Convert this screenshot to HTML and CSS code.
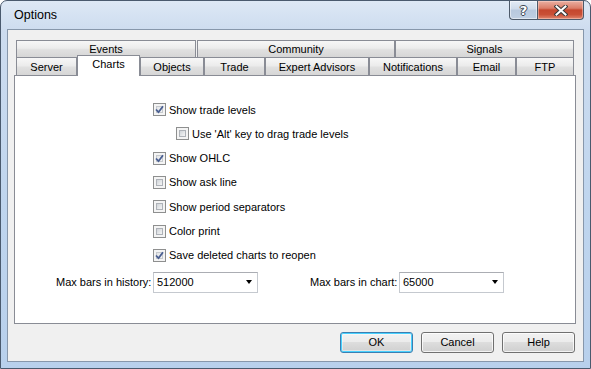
FILE: index.html
```html
<!DOCTYPE html>
<html>
<head>
<meta charset="utf-8">
<link rel="stylesheet" href="styles.css">
</head>
<body>
<div class="window">
  <div class="titlebar">
    <span class="title">Options</span>
    <div class="caption-btns">
      <div class="cbtn help"><span class="qmark">?</span></div>
      <div class="cbtn close">
        <svg width="14" height="11" viewBox="0 0 14 11">
          <path d="M2.5 1.5 L11.5 9.5 M11.5 1.5 L2.5 9.5" stroke="#3a3a3a" stroke-width="4" stroke-linecap="square"/>
          <path d="M2.5 1.5 L11.5 9.5 M11.5 1.5 L2.5 9.5" stroke="#ffffff" stroke-width="2" stroke-linecap="square"/>
        </svg>
      </div>
    </div>
  </div>
  <div class="client">
    <div class="tabctl">
      <div class="tabrow row1">
        <div class="tab t-events">Events</div>
        <div class="tab t-community">Community</div>
        <div class="tab t-signals">Signals</div>
      </div>
      <div class="tabrow row2">
        <div class="tab t-server">Server</div>
        <div class="tab selected t-charts">Charts</div>
        <div class="tab t-objects">Objects</div>
        <div class="tab t-trade">Trade</div>
        <div class="tab t-ea">Expert Advisors</div>
        <div class="tab t-notif">Notifications</div>
        <div class="tab t-email">Email</div>
        <div class="tab t-ftp">FTP</div>
      </div>
      <div class="panel">
        <div class="checks">
          <div class="check"><span class="cb checked"><svg width="9" height="9" viewBox="0 0 9 9"><path d="M1 4.5 L3.5 7.2 L8 1.2" fill="none" stroke="#4a5f92" stroke-width="1.8"/></svg></span><span>Show trade levels</span></div>
          <div class="check indent"><span class="cb"></span><span>Use 'Alt' key to drag trade levels</span></div>
          <div class="check"><span class="cb checked"><svg width="9" height="9" viewBox="0 0 9 9"><path d="M1 4.5 L3.5 7.2 L8 1.2" fill="none" stroke="#4a5f92" stroke-width="1.8"/></svg></span><span>Show OHLC</span></div>
          <div class="check"><span class="cb"></span><span>Show ask line</span></div>
          <div class="check"><span class="cb"></span><span>Show period separators</span></div>
          <div class="check"><span class="cb"></span><span>Color print</span></div>
          <div class="check"><span class="cb checked"><svg width="9" height="9" viewBox="0 0 9 9"><path d="M1 4.5 L3.5 7.2 L8 1.2" fill="none" stroke="#4a5f92" stroke-width="1.8"/></svg></span><span>Save deleted charts to reopen</span></div>
        </div>
        <div class="combos">
          <label class="lbl lbl1">Max bars in history:</label>
          <div class="combo"><span class="val">512000</span><span class="arrow"></span></div>
          <label class="lbl lbl2">Max bars in chart:</label>
          <div class="combo"><span class="val">65000</span><span class="arrow"></span></div>
        </div>
      </div>
    </div>
    <div class="buttons">
      <div class="btn default">OK</div>
      <div class="btn">Cancel</div>
      <div class="btn">Help</div>
    </div>
  </div>
</div>
</body>
</html>
```
FILE: styles.css
```css
html, body {
  margin: 0;
  padding: 0;
  background: #ffffff;
}
body {
  font-family: "Liberation Sans", Arial, sans-serif;
  font-size: 11px;
  color: #000;
}
.window {
  width: 591px;
  height: 369px;
  box-sizing: border-box;
  border: 1px solid #4a5a6e;
  border-radius: 7px 7px 0 0;
  background: linear-gradient(to bottom, #dde8f5 0px, #cddcef 30px, #bfd5ee 200px, #b8d0ec 369px);
  padding: 0 6px 6px;
  display: flex;
  flex-direction: column;
  overflow: hidden;
}
.titlebar {
  height: 28px;
  display: flex;
  align-items: flex-start;
}
.title {
  margin-left: 7px;
  margin-top: 7px;
  font-size: 12.5px;
  line-height: 15px;
  color: #000;
}
.caption-btns {
  margin-left: auto;
  display: flex;
  height: 19px;
}
.cbtn {
  height: 19px;
  box-sizing: border-box;
  border: 1px solid #4d5a6a;
  border-top: none;
  display: flex;
  align-items: center;
  justify-content: center;
}
.help {
  width: 28px;
  border-radius: 0 0 0 4px;
  border-right: none;
  background: linear-gradient(to bottom, #e4ecf5 0%, #cfdbea 45%, #b8c9de 50%, #bfcfe3 100%);
  box-shadow: inset 0 0 0 1px rgba(255,255,255,0.5);
}
.qmark {
  font-family: "DejaVu Sans", sans-serif;
  font-size: 13px;
  font-weight: bold;
  color: #fff;
  line-height: 13px;
  text-shadow: 1px 0 0 #3c4450, -1px 0 0 #3c4450, 0 1px 0 #3c4450, 0 -1px 0 #3c4450;
}
.close {
  width: 47px;
  border-radius: 0 0 4px 0;
  background: linear-gradient(to bottom, #eab0a2 0%, #db7d68 40%, #c5472e 50%, #c95036 75%, #e0876f 100%);
  box-shadow: inset 0 0 0 1px rgba(255,220,210,0.45);
}
.client {
  flex: 1;
  border: 1px solid #8797ab;
  background: #f0f0f0;
  display: flex;
  flex-direction: column;
}
.tabctl {
  margin: 10px 7px 0 6px;
  display: flex;
  flex-direction: column;
}
.tabrow {
  display: flex;
  padding: 0 2px;
}
.row1 {
  height: 17px;
}
.row2 {
  height: 18px;
  align-items: flex-end;
}
.tab {
  box-sizing: border-box;
  border: 1px solid #898c95;
  border-bottom: none;
  background: linear-gradient(to bottom, #f7f7f7 0%, #ececec 45%, #e0e0e0 55%, #d6d6d6 100%);
  text-align: center;
  color: #000;
  height: 100%;
  line-height: 16px;
}
.row1 .tab {
  line-height: 16px;
}
.row2 .tab {
  line-height: 18px;
}
.tab.selected {
  background: #ffffff;
  height: 21px;
  margin-bottom: -1px;
  position: relative;
  z-index: 2;
  line-height: 17px;
}
.t-events { width: 180px; }
.t-community { width: 198px; margin-left: 1px; }
.t-signals { width: 179px; }
.t-server { width: 61px; }
.t-charts { width: 63px; }
.t-objects { width: 64px; }
.t-trade { width: 61px; }
.t-ea { width: 104px; }
.t-notif { width: 88px; }
.t-email { width: 59px; }
.t-ftp { width: 58px; }
.panel {
  height: 249px;
  box-sizing: border-box;
  border: 1px solid #898c95;
  background: #ffffff;
}
.checks {
  padding: 27px 0 0 138px;
  display: flex;
  flex-direction: column;
  gap: 11.33px;
}
.check {
  display: flex;
  align-items: center;
  height: 13px;
  white-space: nowrap;
}
.check.indent {
  padding-left: 23px;
}
.cb {
  width: 13px;
  height: 13px;
  box-sizing: border-box;
  border: 1px solid #8e8f8f;
  background: #f4f4f4;
  margin-right: 3px;
  display: flex;
  align-items: center;
  justify-content: center;
  position: relative;
  flex: none;
}
.cb::before {
  content: "";
  position: absolute;
  left: 2px;
  top: 2px;
  width: 7px;
  height: 7px;
  box-sizing: border-box;
  border: 1px solid #aeb2b8;
  background: linear-gradient(135deg, #cfd3d8 0%, #e6e8ea 60%, #f4f4f4 100%);
}
.cb.checked::before {
  border-color: #c6c9cd;
  background: linear-gradient(135deg, #e3e5e8 0%, #f2f3f4 100%);
}
.cb svg {
  position: relative;
  z-index: 1;
}
.combos {
  display: flex;
  align-items: center;
  margin-top: 10px;
  padding-left: 41px;
}
.lbl {
  white-space: nowrap;
}
.lbl1 {
  width: 97px;
}
.lbl2 {
  width: 89px;
  margin-left: 52px;
}
.combo {
  width: 105px;
  height: 21px;
  box-sizing: border-box;
  border: 1px solid #c5c9cf;
  border-top-color: #abadb3;
  background: #fff;
  display: flex;
  align-items: center;
  padding-left: 3px;
}
.combo .val {
  flex: 1;
}
.arrow {
  width: 0;
  height: 0;
  border-left: 3.5px solid transparent;
  border-right: 3.5px solid transparent;
  border-top: 4px solid #000;
  margin-right: 5px;
}
.buttons {
  display: flex;
  justify-content: flex-end;
  gap: 8px;
  margin-top: 8px;
  padding-right: 8px;
}
.btn {
  width: 73px;
  height: 21px;
  box-sizing: border-box;
  border: 1px solid #707070;
  border-radius: 3px;
  background: linear-gradient(to bottom, #f2f2f2 0%, #ebebeb 50%, #dddddd 50%, #cfcfcf 100%);
  box-shadow: inset 0 0 0 1px rgba(255,255,255,0.75);
  text-align: center;
  line-height: 19px;
}
.btn.default {
  border-color: #3c7fb1;
  box-shadow: inset 0 0 0 1px #48d1ff, inset 0 0 0 2px rgba(255,255,255,0.4);
  background: linear-gradient(to bottom, #eaf6fd 0%, #d9f0fc 50%, #bee6fd 50%, #a7d9f5 100%);
  background: linear-gradient(to bottom, #f2f2f2 0%, #ebebeb 50%, #dddddd 50%, #cfcfcf 100%);
}
```
